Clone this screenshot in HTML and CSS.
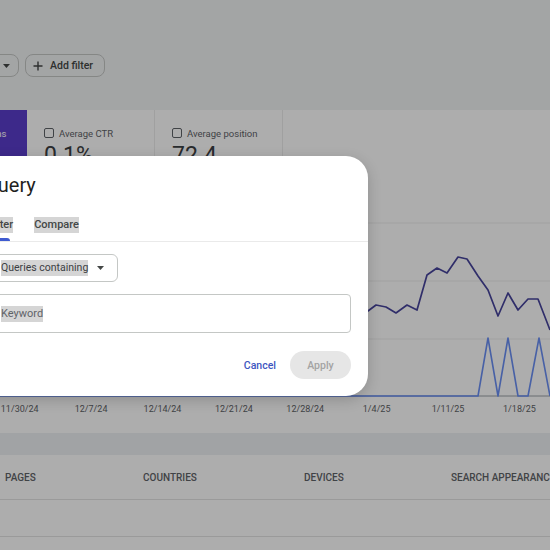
FILE: index.html
```html
<!DOCTYPE html>
<html lang="en">
<head>
<meta charset="utf-8">
<title>Performance – Query filter</title>
<link rel="stylesheet" href="styles.css">
</head>
<body>
<div class="page">
  <header class="top">
    <div class="filters">
      <div class="chip chip-date">
        <span class="chip-text">Date: Last 3 months</span>
        <svg class="caret" width="7" height="4" viewBox="0 0 7 4"><path d="M0 0h7L3.5 4z"/></svg>
      </div>
      <button class="chip chip-add">
        <svg width="10" height="10" viewBox="0 0 10 10"><path d="M5 0.5v9M0.5 5h9" stroke="currentColor" stroke-width="1.4" fill="none"/></svg>
        <span>Add filter</span>
      </button>
    </div>
  </header>

  <section class="perf">
    <div class="cards">
      <div class="card card-impr">
        <div class="card-label"><span class="box box-on"></span>Total impressions</div>
        <div class="card-value">41.2K</div>
      </div>
      <div class="card">
        <div class="card-label"><span class="box"></span>Average CTR</div>
        <div class="card-value">0.1%</div>
      </div>
      <div class="card">
        <div class="card-label"><span class="box"></span>Average position</div>
        <div class="card-value">72.4</div>
      </div>
    </div>
    <svg class="chart" width="550" height="210" viewBox="0 190 550 210">
      <g class="grid">
        <line x1="0" y1="223" x2="550" y2="223"/>
        <line x1="0" y1="281" x2="550" y2="281"/>
        <line x1="0" y1="339" x2="550" y2="339"/>
      </g>
      <line class="base" x1="0" y1="396" x2="550" y2="396"/>
      <polyline class="impr" points="0,330 40,322 80,318 120,326 160,315 200,320 240,312 280,318 320,314 340,318 368,311 376,305 386,307 396,313 407,305 417,310 427,275 437,268 447,273 458,257 467,259 478,276 488,290 498,316 508,293 518,310 528,299 538,299 550,330"/>
      <polyline class="clicks" points="0,396 478,396 488,338 498,396 508,338 518,396 528,396 539,338 550,396"/>
    </svg>
    <div class="axis">
      <span>11/30/24</span><span>12/7/24</span><span>12/14/24</span><span>12/21/24</span>
      <span>12/28/24</span><span>1/4/25</span><span>1/11/25</span><span>1/18/25</span>
    </div>
  </section>

  <div class="band"></div>

  <section class="tables">
    <nav class="tabs">
      <span class="ttab">Pages</span>
      <span class="ttab">Countries</span>
      <span class="ttab">Devices</span>
      <span class="ttab">Search appearance</span>
    </nav>
    <div class="trow"></div>
  </section>
</div>

<div class="scrim"></div>

<div class="dialog" role="dialog">
  <div class="dlg-title">Query</div>
  <div class="dlg-tabs">
    <div class="tab active"><span class="hl">Filter</span></div>
    <div class="tab"><span class="hl">Compare</span></div>
  </div>
  <div class="dlg-body">
    <div class="select">
      <span class="hl">Queries containing</span>
      <svg class="caret" width="7" height="4" viewBox="0 0 7 4"><path d="M0 0h7L3.5 4z"/></svg>
    </div>
    <div class="input"><span class="hl">Keyword</span></div>
    <div class="actions">
      <button class="btn-text">Cancel</button>
      <button class="btn-apply">Apply</button>
    </div>
  </div>
</div>
</body>
</html>
```

FILE: styles.css
```css
* { box-sizing: border-box; }
html, body { margin: 0; padding: 0; }
body {
  width: 550px;
  height: 550px;
  overflow: hidden;
  position: relative;
  background: #f1f3f4;
  font-family: Roboto, "Liberation Sans", Arial, sans-serif;
}

.top { height: 110px; padding-top: 54px; }
.filters { display: flex; gap: 6px; margin-left: -101px; }
.chip {
  height: 23px;
  border: 1px solid #c4c7c5;
  border-radius: 8px;
  background: transparent;
  display: flex;
  align-items: center;
  font: 500 10.5px Roboto, "Liberation Sans", sans-serif;
  color: #444746;
  padding: 0;
}
.chip-date { width: 120px; padding: 0 8px 0 10px; justify-content: space-between; }
.chip-add { padding: 0 11px 0 7px; gap: 7px; }
.caret { fill: #444746; display: block; }

.perf { background: #fff; height: 323px; }
.cards { display: flex; height: 80px; margin-left: -101px; }
.card {
  width: 128px;
  padding: 17px 0 0 17px;
  border-right: 1px solid #ececec;
  color: #5f6368;
}
.card-impr { background: #5b3dcc; color: #fff; border-right: none; }
.card-label { display: flex; align-items: center; gap: 5px; font-size: 9.5px; height: 12px; white-space: nowrap; }
.box { width: 10px; height: 10px; border: 1.3px solid #5f6368; border-radius: 2px; flex: none; }
.box-on { border-color: #fff; background: #fff; }
.card-value { font-size: 23px; line-height: 26px; margin-top: 4px; color: #3c4043; }
.card-impr .card-value { color: #fff; }

.chart { display: block; }
.grid line { stroke: #ededed; stroke-width: 1; }
.base { stroke: #9aa0a6; stroke-width: 1; }
.impr { fill: none; stroke: #47449c; stroke-width: 1.7; stroke-linejoin: round; }
.clicks { fill: none; stroke: #6a8ff5; stroke-width: 1.6; stroke-linejoin: round; }

.axis { display: grid; grid-template-columns: repeat(8, 71.4px); margin-left: -16px; height: 18px; }
.axis span { text-align: center; font-size: 9px; line-height: 18px; color: #5f6368; }

.band { height: 22px; background: #edf0f3; }

.tables { background: #fff; height: 95px; }
.tabs { display: flex; height: 45px; margin-left: -48.5px; border-bottom: 1px solid #e3e3e3; }
.ttab {
  padding: 0 53.6px;
  display: flex;
  align-items: center;
  font-size: 10px;
  font-weight: 500;
  text-transform: uppercase;
  color: #5f6368;
  white-space: nowrap;
}
.trow { height: 37px; border-bottom: 1px solid #e3e3e3; }

.scrim { position: absolute; inset: 0; background: rgba(0, 0, 0, 0.32); }

.dialog {
  position: absolute;
  top: 156px;
  left: -40px;
  width: 408px;
  height: 240px;
  background: #fff;
  border-radius: 22px;
  box-shadow: 0 4px 14px rgba(0, 0, 0, 0.18);
}
.dlg-title {
  padding: 15px 17px 0 24px;
  font-size: 20px;
  line-height: 28px;
  color: #1f1f1f;
}
.dlg-tabs {
  margin-top: 9px;
  height: 34px;
  display: flex;
  gap: 21px;
  padding-left: 28px;
  border-bottom: 1px solid #eaeaea;
}
.tab {
  position: relative;
  display: flex;
  align-items: center;
  font-size: 11px;
  font-weight: 500;
  color: #444746;
}
.tab.active::after {
  content: "";
  position: absolute;
  left: 2px;
  right: 3px;
  bottom: 0;
  height: 3px;
  border-radius: 3px 3px 0 0;
  background: #3f5bd0;
}
.hl { background: #d5d5d5; line-height: 16px; }

.dlg-body { padding: 12px 17px 0 24px; }
.select {
  width: 134px;
  height: 28px;
  border: 1px solid #c4c7c5;
  border-radius: 6px;
  display: flex;
  align-items: center;
  justify-content: space-between;
  padding: 0 13px 0 16px;
  font-size: 10.5px;
  color: #3c4043;
}
.input {
  margin-top: 12px;
  height: 39px;
  border: 1px solid #c4c7c5;
  border-radius: 4px;
  display: flex;
  align-items: center;
  padding: 0 16px;
  font-size: 11px;
  color: #5f6368;
}
.actions {
  margin-top: 18px;
  display: flex;
  justify-content: flex-end;
  align-items: center;
  gap: 14px;
}
.btn-text {
  border: none;
  background: none;
  padding: 0;
  font: 500 10.5px Roboto, "Liberation Sans", sans-serif;
  color: #3d56c0;
}
.btn-apply {
  width: 61px;
  height: 28px;
  border: none;
  border-radius: 14px;
  background: #e6e6e6;
  color: #a3a3a3;
  font: 500 10.5px Roboto, "Liberation Sans", sans-serif;
}
```
